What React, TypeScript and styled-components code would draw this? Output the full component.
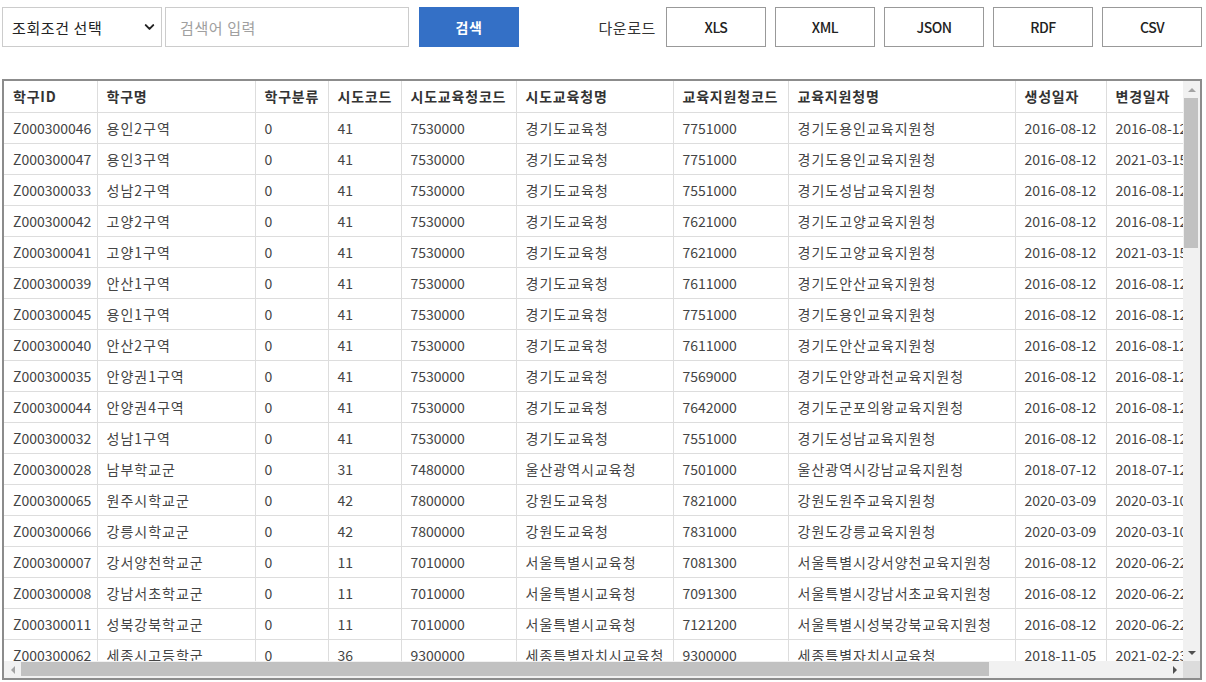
import React from 'react';
import styled, { createGlobalStyle } from 'styled-components';
import { ChevronDown } from 'lucide-react';

const GlobalStyle = createGlobalStyle`
  html, body {
    margin: 0;
    padding: 0;
    background: #ffffff;
  }
  body {
    font-family: 'Noto Sans CJK KR', 'Noto Sans', sans-serif;
    color: #333333;
  }
  * {
    box-sizing: border-box;
  }
`;

type Row = string[];

// ko: column text is Korean, gets a little extra tracking
const COLUMNS = [
  { title: '학구ID', width: 93, ko: false },
  { title: '학구명', width: 158, ko: true },
  { title: '학구분류', width: 73, ko: false },
  { title: '시도코드', width: 73, ko: false },
  { title: '시도교육청코드', width: 115, ko: false },
  { title: '시도교육청명', width: 157, ko: true },
  { title: '교육지원청코드', width: 115, ko: false },
  { title: '교육지원청명', width: 227, ko: true },
  { title: '생성일자', width: 91, ko: false },
  { title: '변경일자', width: 91, ko: false },
  { title: '데이터기준일자', width: 200, ko: false },
];

const ROWS: Row[] = [
  ['Z000300046', '용인2구역', '0', '41', '7530000', '경기도교육청', '7751000', '경기도용인교육지원청', '2016-08-12', '2016-08-12'],
  ['Z000300047', '용인3구역', '0', '41', '7530000', '경기도교육청', '7751000', '경기도용인교육지원청', '2016-08-12', '2021-03-15'],
  ['Z000300033', '성남2구역', '0', '41', '7530000', '경기도교육청', '7551000', '경기도성남교육지원청', '2016-08-12', '2016-08-12'],
  ['Z000300042', '고양2구역', '0', '41', '7530000', '경기도교육청', '7621000', '경기도고양교육지원청', '2016-08-12', '2016-08-12'],
  ['Z000300041', '고양1구역', '0', '41', '7530000', '경기도교육청', '7621000', '경기도고양교육지원청', '2016-08-12', '2021-03-15'],
  ['Z000300039', '안산1구역', '0', '41', '7530000', '경기도교육청', '7611000', '경기도안산교육지원청', '2016-08-12', '2016-08-12'],
  ['Z000300045', '용인1구역', '0', '41', '7530000', '경기도교육청', '7751000', '경기도용인교육지원청', '2016-08-12', '2016-08-12'],
  ['Z000300040', '안산2구역', '0', '41', '7530000', '경기도교육청', '7611000', '경기도안산교육지원청', '2016-08-12', '2016-08-12'],
  ['Z000300035', '안양권1구역', '0', '41', '7530000', '경기도교육청', '7569000', '경기도안양과천교육지원청', '2016-08-12', '2016-08-12'],
  ['Z000300044', '안양권4구역', '0', '41', '7530000', '경기도교육청', '7642000', '경기도군포의왕교육지원청', '2016-08-12', '2016-08-12'],
  ['Z000300032', '성남1구역', '0', '41', '7530000', '경기도교육청', '7551000', '경기도성남교육지원청', '2016-08-12', '2016-08-12'],
  ['Z000300028', '남부학교군', '0', '31', '7480000', '울산광역시교육청', '7501000', '울산광역시강남교육지원청', '2018-07-12', '2018-07-12'],
  ['Z000300065', '원주시학교군', '0', '42', '7800000', '강원도교육청', '7821000', '강원도원주교육지원청', '2020-03-09', '2020-03-10'],
  ['Z000300066', '강릉시학교군', '0', '42', '7800000', '강원도교육청', '7831000', '강원도강릉교육지원청', '2020-03-09', '2020-03-10'],
  ['Z000300007', '강서양천학교군', '0', '11', '7010000', '서울특별시교육청', '7081300', '서울특별시강서양천교육지원청', '2016-08-12', '2020-06-22'],
  ['Z000300008', '강남서초학교군', '0', '11', '7010000', '서울특별시교육청', '7091300', '서울특별시강남서초교육지원청', '2016-08-12', '2020-06-22'],
  ['Z000300011', '성북강북학교군', '0', '11', '7010000', '서울특별시교육청', '7121200', '서울특별시성북강북교육지원청', '2016-08-12', '2020-06-22'],
  ['Z000300062', '세종시고등학군', '0', '36', '9300000', '세종특별자치시교육청', '9300000', '세종특별자치시교육청', '2018-11-05', '2021-02-23'],
  ['Z000300063', '세종시중학군', '0', '36', '9300000', '세종특별자치시교육청', '9300000', '세종특별자치시교육청', '2018-11-05', '2021-02-23'],
  ['Z000300001', '중부학교군', '0', '11', '7010000', '서울특별시교육청', '7021000', '서울특별시중부교육지원청', '2016-08-12', '2020-06-22'],
];

const DOWNLOADS = ['XLS', 'XML', 'JSON', 'RDF', 'CSV'];

const Page = styled.div`
  width: 1206px;
  padding: 7px 0 0 2px;
`;

const Toolbar = styled.div`
  display: flex;
  align-items: center;
  justify-content: space-between;
  width: 1200px;
  height: 40px;
`;

const SearchGroup = styled.div`
  display: flex;
  align-items: center;
  height: 100%;
`;

const SelectWrap = styled.div`
  position: relative;
  width: 160px;
  height: 100%;
  margin-right: 3px;
`;

const Select = styled.select`
  appearance: none;
  width: 100%;
  height: 100%;
  border: 1px solid #cccccc;
  border-radius: 0;
  background: #ffffff;
  padding: 0 0 0 9px;
  font-family: 'Noto Sans CJK KR', sans-serif;
  font-size: 15px;
  letter-spacing: 0.6px;
  color: #222222;
  outline: none;
`;

const SelectArrow = styled.span`
  position: absolute;
  right: 5px;
  top: 50%;
  transform: translateY(-50%);
  display: flex;
  pointer-events: none;
  color: #222222;
`;

const SearchInput = styled.input`
  width: 244px;
  height: 100%;
  border: 1px solid #cccccc;
  padding: 0 14px;
  font-family: 'Noto Sans CJK KR', sans-serif;
  font-size: 15px;
  letter-spacing: 0.6px;
  color: #222222;
  outline: none;
  &::placeholder {
    color: #a0a0a0;
  }
`;

const SearchButton = styled.button`
  width: 100px;
  height: 100%;
  margin-left: 10px;
  border: none;
  background: #3470c6;
  color: #ffffff;
  font-family: 'Noto Sans CJK KR', sans-serif;
  font-size: 14px;
  font-weight: 700;
  letter-spacing: 0.5px;
  cursor: pointer;
`;

const DownloadGroup = styled.div`
  display: flex;
  align-items: center;
  gap: 9px;
  height: 100%;
`;

const DownloadLabel = styled.span`
  font-size: 15px;
  letter-spacing: 0.6px;
  color: #333333;
  margin-right: 1px;
`;

const DownloadButton = styled.button`
  width: 100px;
  height: 100%;
  border: 1px solid #999999;
  background: #ffffff;
  color: #222222;
  font-family: 'Noto Sans CJK KR', sans-serif;
  font-size: 14px;
  font-weight: 500;
  letter-spacing: -0.5px;
  cursor: pointer;
`;

const GridBox = styled.div`
  display: grid;
  grid-template-columns: 1fr 17px;
  grid-template-rows: 580px 17px;
  width: 1200px;
  margin-top: 32px;
  border: 2px solid #8c8c8c;
  background: #ffffff;
`;

const Viewport = styled.div`
  overflow: hidden;
`;

const Table = styled.table<{ $width: number }>`
  width: ${p => p.$width}px;
  table-layout: fixed;
  border-collapse: collapse;
  font-size: 14px;
`;

const Th = styled.th`
  height: 31px;
  padding: 0 9px;
  text-align: left;
  font-weight: 700;
  letter-spacing: 0.8px;
  color: #333333;
  white-space: nowrap;
  overflow: hidden;
  border-right: 1px solid #dddddd;
  border-bottom: 1px solid #dddddd;
`;

const Td = styled.td<{ $ko?: boolean }>`
  height: 31px;
  padding: 0 9px;
  color: #444444;
  letter-spacing: ${p => (p.$ko ? '1px' : '0')};
  white-space: nowrap;
  overflow: hidden;
  border-right: 1px solid #dddddd;
  border-bottom: 1px solid #dddddd;
`;

const ScrollTrack = styled.div<{ $dir: 'v' | 'h' }>`
  display: flex;
  flex-direction: ${p => (p.$dir === 'v' ? 'column' : 'row')};
  background: #f1f1f1;
`;

const ArrowButton = styled.div`
  flex: 0 0 17px;
  display: flex;
  align-items: center;
  justify-content: center;
`;

const Arrow = styled.span<{ $side: 'up' | 'down' | 'left' | 'right'; $off?: boolean }>`
  width: 0;
  height: 0;
  border-style: solid;
  border-color: transparent;
  ${p => {
    const c = p.$off ? '#a3a3a3' : '#505050';
    switch (p.$side) {
      case 'up':
        return `border-width: 0 4px 4px 4px; border-bottom-color: ${c};`;
      case 'down':
        return `border-width: 4px 4px 0 4px; border-top-color: ${c};`;
      case 'left':
        return `border-width: 4px 4px 4px 0; border-right-color: ${c};`;
      default:
        return `border-width: 4px 0 4px 4px; border-left-color: ${c};`;
    }
  }}
`;

const Lane = styled.div<{ $dir: 'v' | 'h' }>`
  flex: 1;
  display: flex;
  flex-direction: ${p => (p.$dir === 'v' ? 'column' : 'row')};
  padding: ${p => (p.$dir === 'v' ? '0 2px 0 1px' : '1px 0 2px 0')};
`;

const Thumb = styled.div<{ $size: number }>`
  flex: 0 0 ${p => p.$size}px;
  background: #c1c1c1;
`;

const Corner = styled.div`
  background: #dcdcdc;
`;

const App: React.FC = () => {
  const tableWidth = COLUMNS.reduce((sum, c) => sum + c.width, 0);

  return (
    <Page>
      <GlobalStyle />
      <Toolbar>
        <SearchGroup>
          <SelectWrap>
            <Select defaultValue="">
              <option value="">조회조건 선택</option>
              <option value="id">학구ID</option>
              <option value="name">학구명</option>
            </Select>
            <SelectArrow>
              <ChevronDown size={15} strokeWidth={3.2} />
            </SelectArrow>
          </SelectWrap>
          <SearchInput placeholder="검색어 입력" />
          <SearchButton>검색</SearchButton>
        </SearchGroup>
        <DownloadGroup>
          <DownloadLabel>다운로드</DownloadLabel>
          {DOWNLOADS.map(d => (
            <DownloadButton key={d}>{d}</DownloadButton>
          ))}
        </DownloadGroup>
      </Toolbar>

      <GridBox>
        <Viewport>
          <Table $width={tableWidth}>
            <colgroup>
              {COLUMNS.map(c => (
                <col key={c.title} style={{ width: c.width }} />
              ))}
            </colgroup>
            <thead>
              <tr>
                {COLUMNS.map(c => (
                  <Th key={c.title}>{c.title}</Th>
                ))}
              </tr>
            </thead>
            <tbody>
              {ROWS.map(r => (
                <tr key={r[0]}>
                  {r.map((v, i) => (
                    <Td key={i} $ko={COLUMNS[i].ko}>
                      {v}
                    </Td>
                  ))}
                  <Td>2023-03-01</Td>
                </tr>
              ))}
            </tbody>
          </Table>
        </Viewport>

        <ScrollTrack $dir="v">
          <ArrowButton>
            <Arrow $side="up" $off />
          </ArrowButton>
          <Lane $dir="v">
            <Thumb $size={150} />
          </Lane>
          <ArrowButton>
            <Arrow $side="down" />
          </ArrowButton>
        </ScrollTrack>

        <ScrollTrack $dir="h">
          <ArrowButton>
            <Arrow $side="left" $off />
          </ArrowButton>
          <Lane $dir="h">
            <Thumb $size={968} />
          </Lane>
          <ArrowButton>
            <Arrow $side="right" />
          </ArrowButton>
        </ScrollTrack>

        <Corner />
      </GridBox>
    </Page>
  );
};

export default App;
